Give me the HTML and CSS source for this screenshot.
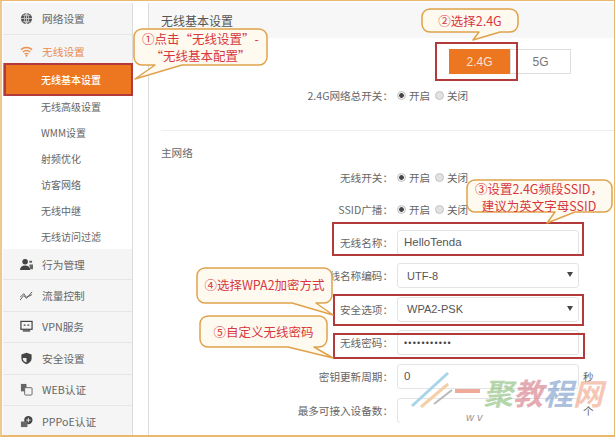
FILE: index.html
```html
<!DOCTYPE html>
<html lang="zh">
<head>
<meta charset="utf-8">
<title>无线基本设置</title>
<link rel="stylesheet" href="styles.css">
</head>
<body>
<div class="frame">
  <nav class="side">
    <div class="top"><svg class="ic" viewBox="0 0 14 14"><circle cx="7" cy="7" r="6" fill="#555"/><path d="M1 7h12M7 1v12M3 3.500h8M3 10.500h8M7 1c-3 3-3 9 0 12M7 1c3 3 3 9 0 12" stroke="#ddd" stroke-width=".8" fill="none"/></svg>网络设置</div>
    <div class="top on"><svg class="ic" viewBox="0 0 14 14"><path d="M1 5c3.500-3 8.500-3 12 0M3 7.500c2.500-2 5.500-2 8 0M5 9.800c1.200-.9 2.800-.9 4 0" stroke="#ee8f4c" stroke-width="1.500" fill="none"/><circle cx="7" cy="11.500" r="1.100" fill="#ee8f4c"/></svg>无线设置</div>
    <div class="sub active">无线基本设置</div>
    <div class="sub">无线高级设置</div>
    <div class="sub">WMM设置</div>
    <div class="sub">射频优化</div>
    <div class="sub">访客网络</div>
    <div class="sub">无线中继</div>
    <div class="sub">无线访问过滤</div>
    <div class="top"><svg class="ic" viewBox="0 0 14 14"><circle cx="5.500" cy="4" r="3" fill="#444"/><path d="M0 13c0-3 2-5 5.500-5S11 10 11 13z" fill="#444"/><path d="M10 3h3v2h-3zM10 7h4v5h-3z" fill="#666"/></svg>行为管理</div>
    <div class="top"><svg class="ic" viewBox="0 0 14 14"><path d="M0 12l4-5 3 3 6-7M0 9l4-4 3 4 6-3" stroke="#555" stroke-width="1" fill="none"/></svg>流量控制</div>
    <div class="top"><svg class="ic" viewBox="0 0 14 14"><rect x="1" y="1.500" width="12" height="8.500" fill="none" stroke="#444" stroke-width="1.300"/><path d="M4 5.500h2M8 5.500h2" stroke="#444" stroke-width="1.200"/><path d="M3 12.500h8v-1.500H3z" fill="#444"/></svg>VPN服务</div>
    <div class="top"><svg class="ic" viewBox="0 0 14 14"><path d="M7 .8l5.500 2v4.200c0 3-2.500 5.200-5.500 6.200-3-1-5.500-3.200-5.500-6.200V2.800z" fill="#444"/><path d="M7 2.500v4H3v1c.5 2 2 3 4 3.800z" fill="#eee"/></svg>安全设置</div>
    <div class="top"><svg class="ic" viewBox="0 0 14 14"><rect x="1" y="1" width="6" height="8" fill="#666"/><rect x="5" y="5" width="8" height="8" rx="1" fill="#f4f4f4" stroke="#666"/></svg>WEB认证</div>
    <div class="top tail"><svg class="ic" viewBox="0 0 14 14"><circle cx="9" cy="5.500" r="4.500" fill="#444"/><rect x="1" y="7" width="7" height="6" fill="#666"/><path d="M9 3v5M6.500 5.500h5" stroke="#eee"/></svg>PPPoE认证</div>
  </nav>
  <main class="panel">
    <h1 class="head">无线基本设置</h1>
    <div class="tabs"><span class="tab sel">2.4G</span><span class="tab">5G</span></div>
    <div class="row first"><span class="lab">2.4G网络总开关：</span><span class="rad chk"></span><span class="opt">开启</span><span class="rad"></span><span class="opt">关闭</span></div>
    <hr class="rule">
    <div class="sect">主网络</div>
    <div class="row"><span class="lab">无线开关：</span><span class="rad chk"></span><span class="opt">开启</span><span class="rad"></span><span class="opt">关闭</span></div>
    <div class="row gap1"><span class="lab">SSID广播：</span><span class="rad chk"></span><span class="opt">开启</span><span class="rad"></span><span class="opt">关闭</span></div>
    <div class="row field"><span class="lab">无线名称：</span><span class="box">HelloTenda</span></div>
    <div class="row field"><span class="lab">无线名称编码：</span><span class="box sel-box">UTF-8<i class="arr"></i></span></div>
    <div class="row field"><span class="lab">安全选项：</span><span class="box sel-box">WPA2-PSK<i class="arr"></i></span></div>
    <div class="row field"><span class="lab">无线密码：</span><span class="box pw">•••••••••••</span></div>
    <div class="row field"><span class="lab">密钥更新周期：</span><span class="box">0</span><span class="unit">秒</span></div>
    <div class="row field"><span class="lab">最多可接入设备数：</span><span class="box"></span><span class="unit">个</span></div>
  </main>

  <div class="strip">w v</div>

  <div class="mark red-1"></div>
  <div class="mark red-2"></div>
  <div class="mark red-3"></div>
  <div class="mark red-4"></div>
  <div class="mark red-5"></div>

  <svg class="bubbles" viewBox="0 0 615 437">
    <g fill="#fffaf0" stroke="#dfa24a" stroke-width="1.500" stroke-linejoin="round">
      <path d="M142 29H259a8 8 0 0 1 8 8V57a8 8 0 0 1-8 8H182L135 79 155 65H142a8 8 0 0 1-8-8V37a8 8 0 0 1 8-8Z"/>
      <path d="M430 9H510a8 8 0 0 1 8 8V24a8 8 0 0 1-8 8H500L473 40 479 32H430a8 8 0 0 1-8-8V17a8 8 0 0 1 8-8Z"/>
      <path d="M475 180H604a8 8 0 0 1 8 8V204a8 8 0 0 1-8 8H575L547 223 555 212H475a8 8 0 0 1-8-8V188a8 8 0 0 1 8-8Z"/>
      <path d="M205 268H324a8 8 0 0 1 8 8V295a8 8 0 0 1-8 8H316L333 315 292 303H205a8 8 0 0 1-8-8V276a8 8 0 0 1 8-8Z"/>
      <path d="M208 316H319a8 8 0 0 1 8 8V339a8 8 0 0 1-8 8H314L333 358 288 347H208a8 8 0 0 1-8-8V324a8 8 0 0 1 8-8Z"/>
    </g>
    <g fill="none" stroke-width="3">
      <path d="M448 373L412 406" stroke="#a9d4ea"/>
      <path d="M448 384L421 407" stroke="#f4cfa8"/>
      <path d="M452 390L434 404" stroke="#b9b9b9" stroke-width="2"/>
      <path d="M455 391H480" stroke="#f0a898" stroke-width="4"/>
    </g>
  </svg>

  <div class="note n1">①点击“无线设置”-<br>“无线基本配置”</div>
  <div class="note n2">②选择2.4G</div>
  <div class="note n3">③设置2.4G频段SSID，<br>建议为英文字母SSID</div>
  <div class="note n4">④选择WPA2加密方式</div>
  <div class="note n5">⑤自定义无线密码</div>
  <div class="wm"><span class="g">聚</span><span class="r">教</span><span class="b">程</span><span class="o">网</span></div>
</div>
</body>
</html>
```
FILE: styles.css
```css
* { box-sizing: border-box; }
html, body { margin: 0; padding: 0; }
body { width: 615px; height: 437px; overflow: hidden; background: #fff; font-family: "Noto Sans CJK SC", "Liberation Sans", sans-serif; color: #555; }
.frame { position: relative; width: 615px; height: 437px; display: flex; padding: 2px 1px 0 1px; overflow: hidden; border: 1px solid #e9b76e; border-bottom-width: 2px; border-left-width: 2px; border-left-color: #f0c88c; }
.side { width: 130px; flex: none; border-right: 1px solid #dcdcdc; }
.top { height: 31.400px; display: flex; align-items: center; background: #f5f5f5; border-bottom: 1px solid #e6e6e6; padding-left: 17px; font-size: 10.700px; color: #666; }
.top:first-child { height: 32px; }
.top.on { color: #e98c50; height: 28px; padding-top: 4px; border-bottom: 0; }
.top.tail { border-bottom: 0; }
.ic { width: 13px; height: 13px; margin-right: 9px; flex: none; }
.sub { height: 26px; display: flex; align-items: center; padding-left: 38px; font-size: 10px; color: #666; }
.sub.active { height: 33px; margin-bottom: -3px; background: #ed7620; color: #fff; font-weight: 500; }
.panel { flex: none; width: 467px; margin-left: 15px; border-left: 1px solid #dcdcdc; }
.head { margin: 0; height: 35px; padding: 0 0 0 12px; display: flex; align-items: center; background: #f7f7f7; font-size: 12px; font-weight: 400; color: #555; }
.tabs { display: flex; margin: 11px 0 0 300px; height: 25px; }
.tab { width: 61px; display: flex; align-items: center; justify-content: center; border: 1px solid #ddd; font-family: "Liberation Sans", sans-serif; font-size: 12px; color: #777; }
.tab.sel { background: #ed7620; border-color: #ed7620; color: #fbe3d0; }
.row { display: flex; align-items: center; height: 24px; font-size: 10.600px; color: #666; }
.row.first { margin-top: 9px; }
.row.gap1 { margin-top: 8px; }
.row.field { height: 25px; margin-top: 8.600px; }
.lab { width: 244px; text-align: right; flex: none; white-space: nowrap; }
.rad { width: 9px; height: 9px; margin: 0 3px 0 4px; border-radius: 50%; background: #e2e2e2; border: 1px solid #c4c4c4; flex: none; }
.rad.chk { background: radial-gradient(circle, #444 0 2px, #eee 2.600px); }
.opt { width: 22px; }
.rule { margin: 23px 0 0 12px; border: 0; border-top: 1px solid #eee; height: 0; }
.sect { margin: 14px 0 0 12px; height: 20px; line-height: 16px; font-size: 10.600px; color: #666; }
.box { width: 182px; height: 25px; margin-left: 4px; display: flex; align-items: center; padding-left: 6px; border: 1px solid #e4e4e4; border-radius: 3px; font-family: "Liberation Sans", sans-serif; font-size: 11.500px; color: #555; position: relative; }
.sel-box { padding-left: 9px; font-size: 11px; }
.pw { font-size: 9px; letter-spacing: 1.200px; color: #444; }
.arr { position: absolute; right: 5px; top: 8px; border: 3px solid transparent; border-top: 5px solid #444; border-bottom: 0; }
.unit { margin-left: 4px; font-size: 10.600px; }
.strip { position: absolute; left: 398px; top: 404px; width: 182px; height: 27px; background: #fff; padding-left: 66px; font-family: "Liberation Sans", sans-serif; font-size: 11px; font-style: italic; line-height: 24px; color: #999; }
.mark { position: absolute; border: 2px solid #b23a3a; }
.red-1 { left: 2px; top: 62px; width: 129px; height: 33px; }
.red-2 { left: 433px; top: 41px; width: 83px; height: 39px; }
.red-3 { left: 330px; top: 221px; width: 252px; height: 34px; }
.red-4 { left: 331px; top: 293px; width: 251px; height: 32px; }
.red-5 { left: 331px; top: 332px; width: 252px; height: 26px; }
.bubbles { position: absolute; left: -2px; top: -1px; width: 615px; height: 437px; pointer-events: none; }
.note { position: absolute; color: #d7383f; font-size: 12.500px; line-height: 17px; text-align: center; white-space: nowrap; }
.n1 { left: 132px; top: 29px; width: 133px; }
.n2 { left: 420px; top: 11px; width: 96px; }
.n3 { left: 465px; top: 179px; width: 144px; }
.n4 { left: 195px; top: 275px; width: 135px; }
.n5 { left: 198px; top: 322px; width: 127px; }
.wm { position: absolute; left: 481px; top: 374px; display: flex; font-family: "Noto Sans CJK SC", sans-serif; font-size: 30px; font-weight: 700; line-height: 34px; font-style: italic; opacity: .65; }
.g { color: #8fbf7f; }
.r { color: #d87f8c; }
.b { color: #7fa0cc; }
.o { color: #f2a98f; }
```
